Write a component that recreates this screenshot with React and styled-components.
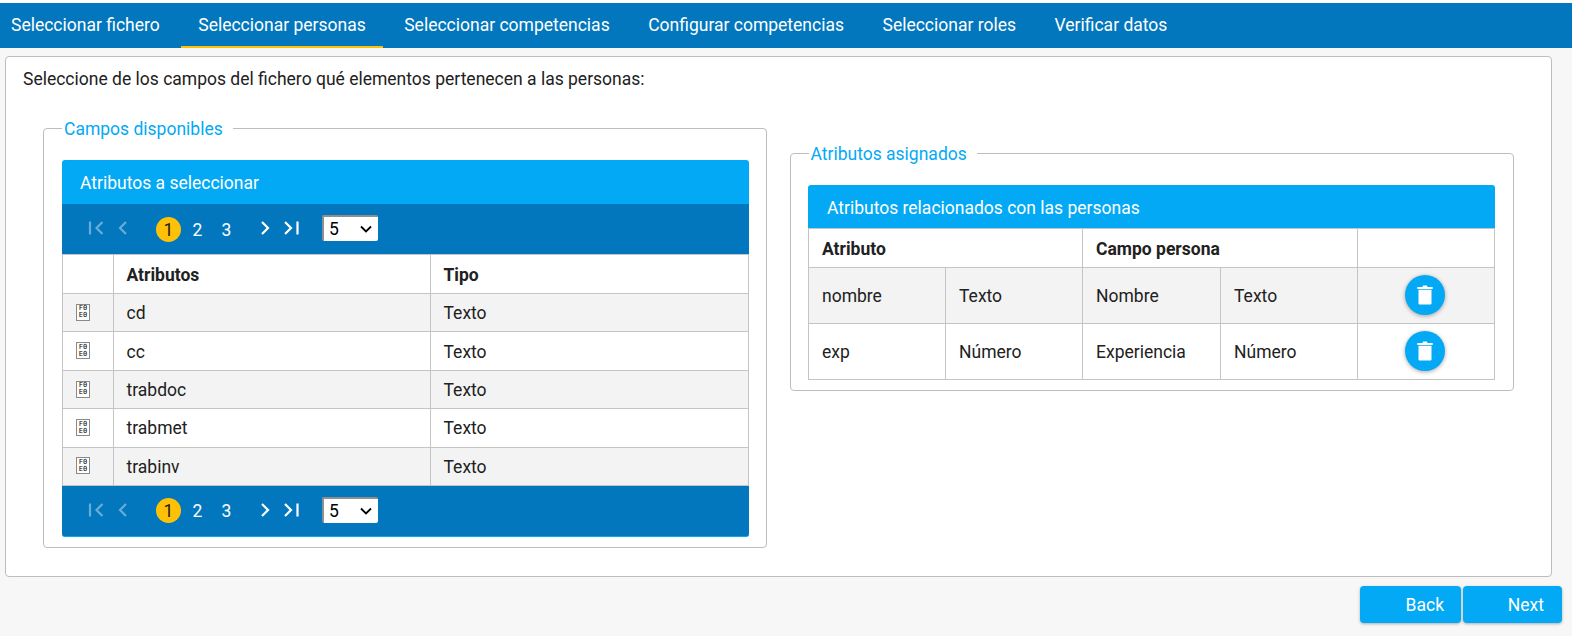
import React from "react";
import styled, { createGlobalStyle } from "styled-components";

const Global = createGlobalStyle`
  html, body { margin: 0; padding: 0; background: #f7f7f7; }
  body { font-family: Roboto, "Liberation Sans", sans-serif; font-size: 17.5px; color: #212121; }
  * { box-sizing: border-box; }
`;

const Page = styled.div`
  width: 1572px;
  height: 636px;
  padding-top: 3px;
  background: linear-gradient(#fff 0 3px, #f7f7f7 3px);
  display: flex;
  flex-direction: column;
`;

const TabBar = styled.nav`
  height: 45px;
  background: #0277bd;
  display: flex;
  gap: 3.5px;
  padding-left: 11px;
  margin-bottom: 8px;
`;

const Tab = styled.a`
  display: flex;
  align-items: center;
  height: 45px;
  padding: 1px 17.5px 0;
  color: #fff;
  font-size: 17.5px;
  white-space: nowrap;
  border-bottom: 2px solid ${(p) => (p.$active ? "#ffc107" : "transparent")};
  &:first-child { padding-left: 0; padding-right: 17.5px; }
`;

const Panel = styled.main`
  margin: 0 20px 0 5px;
  height: 521px;
  background: #fff;
  border: 1px solid #bdbdbd;
  border-radius: 4px;
  padding: 11px 17px 0;
`;

const Intro = styled.p`
  margin: 0 0 27px;
  font-size: 17.5px;
  line-height: 22px;
  color: #212121;
`;

const Columns = styled.div`
  display: flex;
  align-items: flex-start;
  padding-left: 20px;
  gap: 23px;
`;

const Group = styled.fieldset`
  width: 724px;
  margin: ${(p) => p.$top}px 0 0;
  padding: 21px ${(p) => p.$right}px ${(p) => p.$bottom}px ${(p) => p.$left}px;
  border: 1px solid #bdbdbd;
  border-radius: 4px;
  min-width: 0;
`;

const Legend = styled.legend`
  margin-left: ${(p) => p.$shift || 0}px;
  padding: 2px 10px 0 2px;
  color: #03a9f4;
  font-size: 17.5px;
  line-height: 20px;
`;

const Card = styled.section`
  border-radius: 3px 3px 0 0;
  overflow: hidden;
`;

const CardTitle = styled.header`
  height: ${(p) => p.$h}px;
  background: #03a9f4;
  color: #fff;
  font-size: 17.5px;
  display: flex;
  align-items: center;
  padding: 2px 0 0 ${(p) => p.$pad}px;
`;

const Pager = styled.div`
  height: ${(p) => (p.$foot ? 51 : 50)}px;
  background: #0277bd;
  display: flex;
  align-items: center;
  padding-left: 23px;
  color: #fff;
  ${(p) => p.$foot && "border-bottom: 1px solid #03a9f4; border-radius: 0 0 3px 3px;"}
`;

const PagerIcon = styled.svg`
  width: 24px;
  height: 24px;
  margin-right: ${(p) => p.$mr || 0}px;
  margin-bottom: 2px;
  fill: none;
  stroke: currentColor;
  stroke-width: 2.2;
  opacity: ${(p) => (p.$dim ? 0.4 : 1)};
  flex: none;
`;

const PageNum = styled.span`
  width: 25px;
  height: 25px;
  margin-right: ${(p) => p.$mr || 4}px;
  border-radius: 50%;
  display: flex;
  align-items: center;
  justify-content: center;
  font-size: 17.5px;
  padding-top: 1px;
  background: ${(p) => (p.$active ? "#ffc107" : "transparent")};
  color: ${(p) => (p.$active ? "#212121" : "#fff")};
  flex: none;
`;

const SizeSelect = styled.div`
  margin: 0 0 2px 19px;
  width: 56px;
  height: 26px;
  background: #fff;
  border-style: solid;
  border-color: #8f8f8f #fff #fff #8f8f8f;
  border-width: 2px 0 0 2px;
  border-radius: 2px;
  color: #000;
  font-size: 17.5px;
  display: flex;
  align-items: center;
  justify-content: space-between;
  padding: 0 6px 0 5px;
`;

const Chevron = styled.svg`
  width: 12px;
  height: 12px;
  fill: none;
  stroke: #000;
  stroke-width: 1.8;
`;

const Table = styled.table`
  width: 100%;
  border-collapse: collapse;
  table-layout: fixed;
  font-size: 17.5px;
  th, td { padding-left: ${(p) => p.$pad}px; padding-right: ${(p) => p.$pad}px; }
`;

const Th = styled.th`
  height: 39px;
  border: 1px solid #c4c4c4;
  text-align: left;
  padding-top: 2px;
  padding-bottom: 0;
  font-weight: 700;
  color: #212121;
  font-size: 17.5px;
`;

const Row = styled.tr`
  background: ${(p) => (p.$odd ? "#f3f3f3" : "#fff")};
`;

const Td = styled.td`
  height: ${(p) => p.$h || 38.4}px;
  border: 1px solid #c4c4c4;
  padding-top: 1px;
  padding-bottom: 0;
  color: #212121;
  text-align: ${(p) => (p.$center ? "center" : "left")};
`;

const Tofu = styled.span`
  display: inline-flex;
  flex-direction: column;
  align-items: center;
  justify-content: center;
  width: 14px;
  height: 17px;
  margin: 0 0 3px 0.5px;
  border: 1px solid #8a8a8a;
  background: #fff;
  font-family: "DejaVu Sans Mono", monospace;
  font-size: 7px;
  line-height: 7px;
  color: #000;
  vertical-align: middle;
`;

const RoundButton = styled.button`
  width: 40px;
  height: 40px;
  margin: 0 3px 3px 0;
  border: 0;
  border-radius: 50%;
  background: #03a9f4;
  box-shadow: 0 1px 4px rgba(0, 0, 0, 0.35);
  display: inline-flex;
  align-items: center;
  justify-content: center;
  padding: 0;
  vertical-align: middle;
`;

const Footer = styled.footer`
  display: flex;
  justify-content: flex-end;
  gap: 2px;
  padding: 9px 10px 0 0;
`;

const NavButton = styled.button`
  width: ${(p) => p.$w}px;
  height: 37px;
  border: 0;
  border-radius: 4px;
  background: #03a9f4;
  color: #fff;
  font-family: inherit;
  font-size: 17.5px;
  text-align: right;
  padding: 0 ${(p) => p.$pad}px 0 0;
  box-shadow: 0 1px 3px rgba(0, 0, 0, 0.3);
`;

const Trash = () => (
  <svg width="16" height="20" viewBox="0 0 16 20" aria-hidden="true">
    <path fill="#fff" d="M.3 2h5.2l.5-1.4h4l.5 1.4h5.2v2H.3zM1.5 4.8h13v13.4c0 .9-.6 1.4-1.4 1.4H2.9c-.8 0-1.4-.5-1.4-1.4z" />
  </svg>
);

const Paginator = ({ foot }) => (
  <Pager $foot={foot}>
    <PagerIcon viewBox="0 0 24 24" $dim $mr={2}><path d="M5 5.5v13M17.5 6l-6 6 6 6" /></PagerIcon>
    <PagerIcon viewBox="0 0 24 24" $dim $mr={21}><path d="M15 6l-6 6 6 6" /></PagerIcon>
    <PageNum $active>1</PageNum>
    <PageNum>2</PageNum>
    <PageNum $mr={14}>3</PageNum>
    <PagerIcon viewBox="0 0 24 24" $mr={2}><path d="M9 6l6 6-6 6" /></PagerIcon>
    <PagerIcon viewBox="0 0 24 24"><path d="M6 6l6 6-6 6M18.5 5.5v13" /></PagerIcon>
    <SizeSelect>5<Chevron viewBox="0 0 12 12"><path d="M1 3.5l5 5 5-5" /></Chevron></SizeSelect>
  </Pager>
);

const available = ["cd", "cc", "trabdoc", "trabmet", "trabinv"];
const assigned = [
  ["nombre", "Texto", "Nombre", "Texto"],
  ["exp", "Número", "Experiencia", "Número"],
];
const tabs = ["Seleccionar fichero", "Seleccionar personas", "Seleccionar competencias", "Configurar competencias", "Seleccionar roles", "Verificar datos"];

export default function App() {
  return (
    <Page>
      <Global />
      <TabBar>
        {tabs.map((t, i) => <Tab key={t} $active={i === 1}>{t}</Tab>)}
      </TabBar>
      <Panel>
        <Intro>Seleccione de los campos del fichero qué elementos pertenecen a las personas:</Intro>
        <Columns>
          <Group $top={0} $left={18} $right={17} $bottom={10}>
            <Legend>Campos disponibles</Legend>
            <Card>
              <CardTitle $h={44} $pad={18}>Atributos a seleccionar</CardTitle>
              <Paginator />
              <Table $pad={12.5}>
                <colgroup><col style={{ width: 51 }} /><col style={{ width: 317 }} /><col /></colgroup>
                <thead>
                  <tr><Th /><Th>Atributos</Th><Th>Tipo</Th></tr>
                </thead>
                <tbody>
                  {available.map((a, i) => (
                    <Row key={a} $odd={i % 2 === 0}>
                      <Td><Tofu><span>F0</span><span>E0</span></Tofu></Td>
                      <Td>{a}</Td>
                      <Td>Texto</Td>
                    </Row>
                  ))}
                </tbody>
              </Table>
              <Paginator foot />
            </Card>
          </Group>
          <Group $top={25} $left={17} $right={18} $bottom={10}>
            <Legend $shift={0.5}>Atributos asignados</Legend>
            <Card>
              <CardTitle $h={43} $pad={19}>Atributos relacionados con las personas</CardTitle>
              <Table $pad={13}>
                <colgroup><col style={{ width: 137 }} /><col style={{ width: 137 }} /><col style={{ width: 138 }} /><col style={{ width: 137 }} /><col /></colgroup>
                <thead>
                  <tr><Th colSpan={2}>Atributo</Th><Th colSpan={2}>Campo persona</Th><Th /></tr>
                </thead>
                <tbody>
                  {assigned.map((r, i) => (
                    <Row key={r[0]} $odd={i % 2 === 0}>
                      {r.map((c, j) => <Td key={j} $h={56}>{c}</Td>)}
                      <Td $h={56} $center><RoundButton aria-label="Eliminar"><Trash /></RoundButton></Td>
                    </Row>
                  ))}
                </tbody>
              </Table>
            </Card>
          </Group>
        </Columns>
      </Panel>
      <Footer>
        <NavButton $w={101} $pad={17}>Back</NavButton>
        <NavButton $w={99} $pad={18}>Next</NavButton>
      </Footer>
    </Page>
  );
}
